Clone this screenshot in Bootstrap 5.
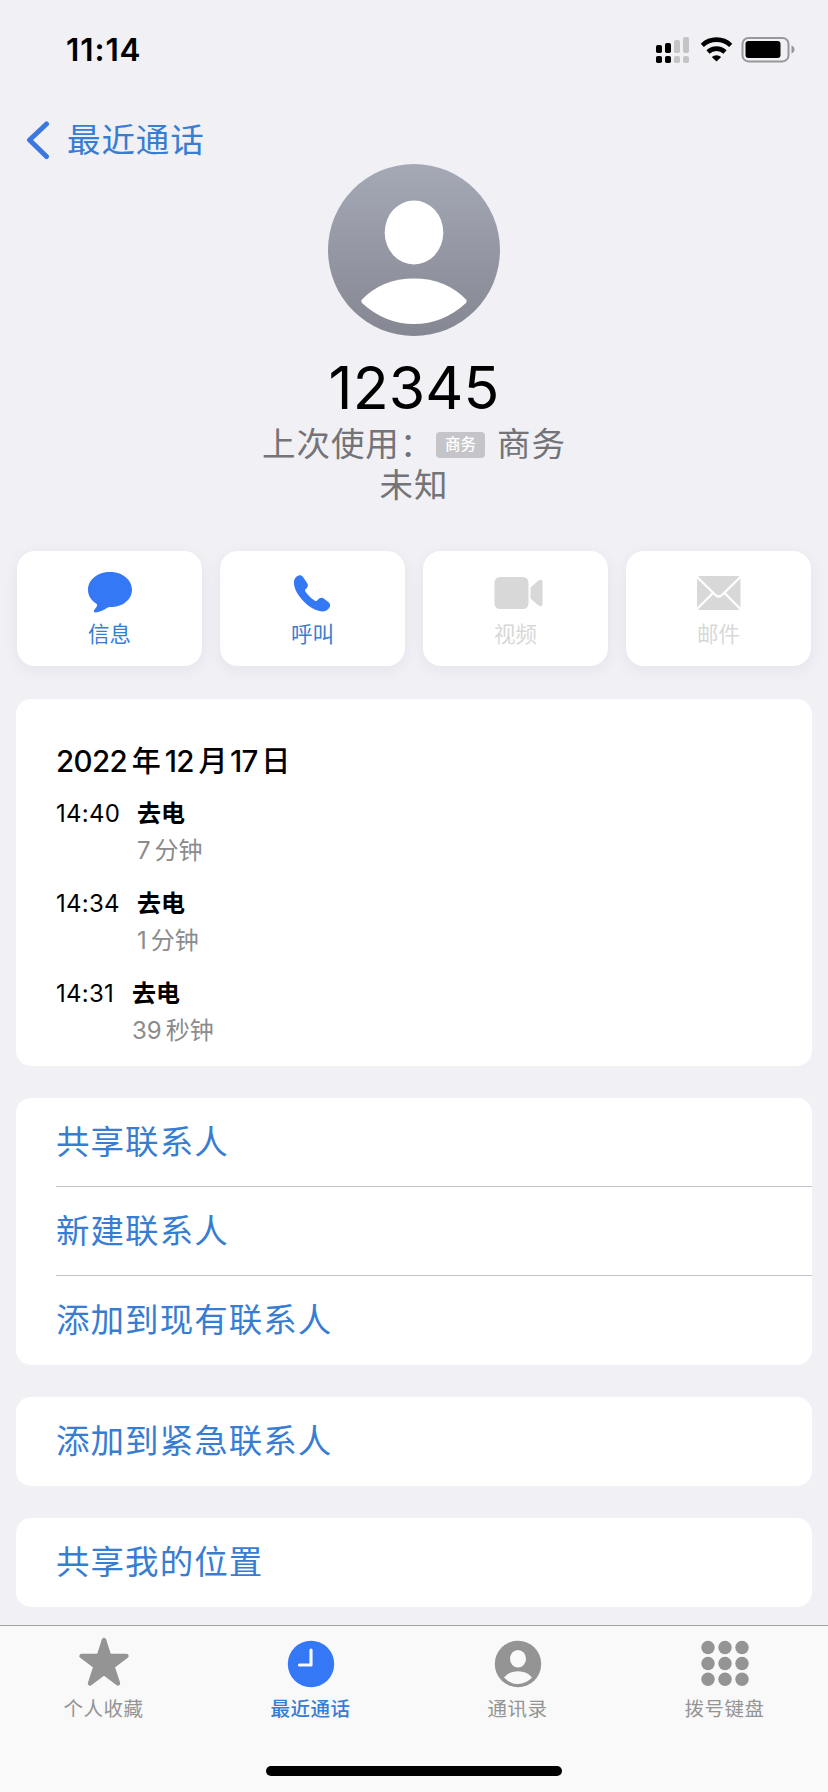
<!DOCTYPE html>
<html lang="zh-CN">
<head>
<meta charset="utf-8">
<meta name="viewport" content="width=device-width, initial-scale=1">
<title>12345</title>
<link href="https://cdn.jsdelivr.net/npm/bootstrap@5.3.0/dist/css/bootstrap.min.css" rel="stylesheet">
<style>
  :root { --ink-blue: #377dd2; --fill-blue: #3478f6; --page: #f0f0f5; }
  body { background: var(--page); font-family: Inter, "Noto Sans CJK SC", sans-serif; color: #000; width: 828px; height: 1792px; overflow: hidden; }
  svg { display: block; flex: none; }
  .phone { height: 1792px; }
  .status { height: 100px; padding: 0 33px 0 66px; }
  .clock { font-size: 31.5px; font-weight: 600; line-height: 38px; letter-spacing: .9px; }
  .back { height: 64px; padding: 20px 0 0 26px; color: var(--ink-blue); font-size: 33.5px; letter-spacing: .9px; line-height: 40px; }
  .back span { margin-left: 16px; }
  .who { height: 387px; }
  .num { font-size: 59px; line-height: 72px; margin-top: 16px; letter-spacing: .1px; }
  .sub { font-size: 33.5px; letter-spacing: .9px; line-height: 41px; color: #737378; }
  .sim { width: 49px; height: 26px; border-radius: 4px; background: #c5c5c9; color: #fff; font-size: 15.5px; font-weight: 500; letter-spacing: 0; line-height: 26px; margin: 0 12px 0 2px; }
  .actions { padding: 0 17px; gap: 18px; height: 115px; }
  .act { flex: 1 1 0; background: #fff; border-radius: 18px; box-shadow: 0 4px 16px rgba(40,40,80,.06); color: var(--ink-blue); font-size: 21.5px; line-height: 26px; }
  .act svg { margin-top: 18px; margin-bottom: 6px; }
  .off { color: #d8d8d8; }
  .sheet { background: #fff; border-radius: 15px; margin: 32px 16px 0; padding-left: 40px; }
  .log { height: 367px; margin-top: 33px; padding-top: 44px; }
  .date { font-size: 29.5px; font-weight: 500; line-height: 36px; height: 52px; letter-spacing: -.6px; }
  .date i { font-style: normal; font-size: 29px; letter-spacing: 0; margin: 0 4px 0 4.5px; }
  .date i + i { margin-right: 2.5px; }
  .date i:last-child { margin-left: 3.5px; }
  .call { height: 90px; font-size: 24px; line-height: 37px; }
  .tm { letter-spacing: .25px; }
  .call b { font-size: 24px; }
  .dur { color: #8b8b8d; }
  .dur i { font-style: normal; margin-left: 4px; }
  .item { height: 89px; padding-bottom: 1px; font-size: 33.5px; letter-spacing: 1.05px; color: var(--ink-blue); display: flex; align-items: center; line-height: 40px; }
  .item:not(:last-child) { border-bottom: 1px solid #c3c3c7; padding-bottom: 0; }
  .tabs { position: fixed; left: 0; top: 1625px; width: 828px; height: 167px; background: #f9f9f9; border-top: 1px solid #a4a4a7; }
  .tab-cell { flex: 1 1 0; color: #949494; font-size: 19.5px; letter-spacing: .5px; line-height: 26px; padding-top: 10px; }
  .tab-cell svg { margin-bottom: 8px; }
  .now { color: var(--ink-blue); font-weight: 500; }
  .homebar { width: 296px; height: 10px; border-radius: 5px; background: #000; position: absolute; left: 266px; top: 140px; }
</style>
</head>
<body>
<div class="phone d-flex flex-column">
  <header class="status d-flex justify-content-between align-items-center">
    <div class="clock">11:14</div>
    <svg width="140" height="30" viewBox="654 35 140 30">
      <g fill="#000"><rect x="655" y="45" width="6" height="8" rx="1.8"/><rect x="664" y="43" width="6" height="10" rx="1.8"/><rect x="655" y="56" width="6" height="7" rx="1.8"/><rect x="664" y="56" width="6" height="7" rx="1.8"/></g>
      <g fill="#c4c4c7"><rect x="673" y="40" width="6" height="13" rx="1.8"/><rect x="682" y="37" width="6" height="16" rx="1.8"/><rect x="673" y="56" width="6" height="7" rx="1.8"/><rect x="682" y="56" width="6" height="7" rx="1.8"/></g>
      <g fill="none" stroke="#000" stroke-width="4.6"><path d="M701.3 45.3a20.5 20.5 0 0 1 28.4 0"/><path d="M707 52a12.4 12.4 0 0 1 17 0"/></g>
      <path d="M710.8 57a7 7 0 0 1 9.4 0l-4.700 4.400z"/>
      <rect x="741.500" y="38" width="46" height="23.400" rx="6" fill="none" stroke="#98989b" stroke-width="2"/>
      <rect x="744.500" y="41" width="35" height="17" rx="3"/>
      <path d="M790.500 45.500q3 1.200 3 4t-3 4z" fill="#98989b"/>
    </svg>
  </header>
  <nav class="back d-flex align-items-start">
    <svg width="25" height="40" viewBox="26 120 25 40" fill="none" stroke="#3a78df" stroke-width="5" stroke-linecap="round" stroke-linejoin="round"><path d="M46.500 124L29.500 140L46.500 156.500"/></svg>
    <span>最近通话</span>
  </nav>
  <section class="who d-flex flex-column align-items-center text-nowrap">
    <svg width="172" height="172" viewBox="0 0 172 172">
      <defs><linearGradient id="grey" x2="0" y2="1"><stop stop-color="#a5a9b6"/><stop offset="1" stop-color="#858792"/></linearGradient></defs>
      <circle cx="86" cy="86" r="86" fill="url(#grey)"/>
      <ellipse cx="86" cy="68.500" rx="29.300" ry="32" fill="#fff"/>
      <path d="M33.500 136Q54 114.500 86 114.500T138.500 136Q139 137 138 139Q115 160 86 160T34 139Q33 137 33.500 136z" fill="#fff"/>
    </svg>
    <div class="num">12345</div>
    <div class="sub d-flex align-items-center"><span>上次使用：</span><span class="sim text-center">商务</span><span>商务</span></div>
    <div class="sub">未知</div>
  </section>
  <section class="actions d-flex">
    <div class="act d-flex flex-column align-items-center">
      <svg width="50" height="46" viewBox="0 0 50 46" fill="#3478f6"><path d="M25 3C12.500 3 3 10.800 3 20.800c0 6 3.200 10.600 8.500 14 .8.600.8 1.400.3 2.400-.7 1.600-1.300 2.200-2.300 3.300-1.300 1.400-.6 3 1.400 2.900 4.400-.5 8-2.500 11-4.500 1.200-.7 2-.8 3.500-.8 12.500 0 21.600-7.500 21.600-17.300C47 10.800 37.500 3 25 3z"/></svg>信息</div>
    <div class="act d-flex flex-column align-items-center">
      <svg width="50" height="46" viewBox="1.500 0.500 50 46" fill="#3478f6"><path d="M11 7.500C13 6.300 15 6.700 16.500 8.500L20.600 14.500C22 16.800 21.500 18.500 19.500 20.300C18.300 21.400 18.300 22.200 19.200 23.600C21.700 27 24.700 30 28 32C29.300 32.800 30 32.800 31.200 31.600C32.800 29.500 35 28.700 37.200 30L41.500 33.300C43.800 35 44.200 37 43 39C41 42 37.800 43.400 34 42.800C26.500 41.500 18.500 35.500 13 28C9 22.500 7 17 7.500 13C7.700 10.500 9 8.500 11 7.500z"/></svg>呼叫</div>
    <div class="act off d-flex flex-column align-items-center">
      <svg width="50" height="46" viewBox="0 0 50 46" fill="#d8d8d8" overflow="visible"><rect x="3.500" y="8" width="34" height="32" rx="5.500"/><path d="M39.500 18.500L47.500 11.500q4-2 4 1.500V35q0 3.500-4 1.500L39.500 29.500z"/></svg>视频</div>
    <div class="act off d-flex flex-column align-items-center">
      <svg width="50" height="46" viewBox="0 0 50 46"><rect x="3" y="7" width="43.500" height="34" rx="3" fill="#d8d8d8"/><path d="M2 7L21.500 26Q24.750 29 28 26L47.500 7M2 41L18.500 24.500M47.500 41L31 24.500" fill="none" stroke="#fff" stroke-width="2.300"/></svg>邮件</div>
  </section>
  <section class="sheet log">
    <div class="date">2022<i>年</i>12<i>月</i>17<i>日</i></div>
    <div class="call d-flex"><span class="tm" style="width:81px">14:40</span><div><b>去电</b><div class="dur">7<i>分钟</i></div></div></div>
    <div class="call d-flex"><span class="tm" style="width:81px">14:34</span><div><b>去电</b><div class="dur">1<i>分钟</i></div></div></div>
    <div class="call d-flex"><span class="tm" style="width:76px">14:31</span><div><b>去电</b><div class="dur">39<i>秒钟</i></div></div></div>
  </section>
  <section class="sheet"><div class="item">共享联系人</div><div class="item">新建联系人</div><div class="item">添加到现有联系人</div></section>
  <section class="sheet"><div class="item">添加到紧急联系人</div></section>
  <section class="sheet"><div class="item">共享我的位置</div></section>
</div>
<nav class="tabs d-flex">
  <div class="tab-cell d-flex flex-column align-items-center"><svg width="52" height="52" viewBox="0 0 52 52" fill="#949494" stroke="#949494" stroke-width="4.400" stroke-linejoin="round"><path d="M26 4L31.200 20H48.500L34.500 30.500L40 47.500L26 37L12 47.500L17.500 30.500L3.500 20H20.800z"/></svg>个人收藏</div>
  <div class="tab-cell now d-flex flex-column align-items-center"><svg width="52" height="52" viewBox="0 0 52 52"><circle cx="26" cy="28" r="23.200" fill="#3478f6"/><path d="M26 14V29H14.500" fill="none" stroke="#f4f8ff" stroke-width="3.200" stroke-linecap="round" stroke-linejoin="round"/></svg>最近通话</div>
  <div class="tab-cell d-flex flex-column align-items-center"><svg width="52" height="52" viewBox="0 0 52 52"><circle cx="26" cy="28" r="23.200" fill="#949494"/><ellipse cx="26" cy="22.800" rx="8" ry="8.800" fill="#f9f9f9"/><path d="M12 41.500Q17 35.200 26 35.200T40 41.500Q34 48 26 48T12 41.500z" fill="#f9f9f9"/></svg>通讯录</div>
  <div class="tab-cell d-flex flex-column align-items-center"><svg width="52" height="52" viewBox="0 0 52 52" fill="#949494"><circle cx="9" cy="11.500" r="6.700"/><circle cx="26" cy="11.500" r="6.700"/><circle cx="43" cy="11.500" r="6.700"/><circle cx="9" cy="27.500" r="6.700"/><circle cx="26" cy="27.500" r="6.700"/><circle cx="43" cy="27.500" r="6.700"/><circle cx="9" cy="43.300" r="6.700"/><circle cx="26" cy="43.300" r="6.700"/><circle cx="43" cy="43.300" r="6.700"/></svg>拨号键盘</div>
  <div class="homebar"></div>
</nav>
<script src="https://cdn.jsdelivr.net/npm/bootstrap@5.3.0/dist/js/bootstrap.bundle.min.js"></script>
</body>
</html>
